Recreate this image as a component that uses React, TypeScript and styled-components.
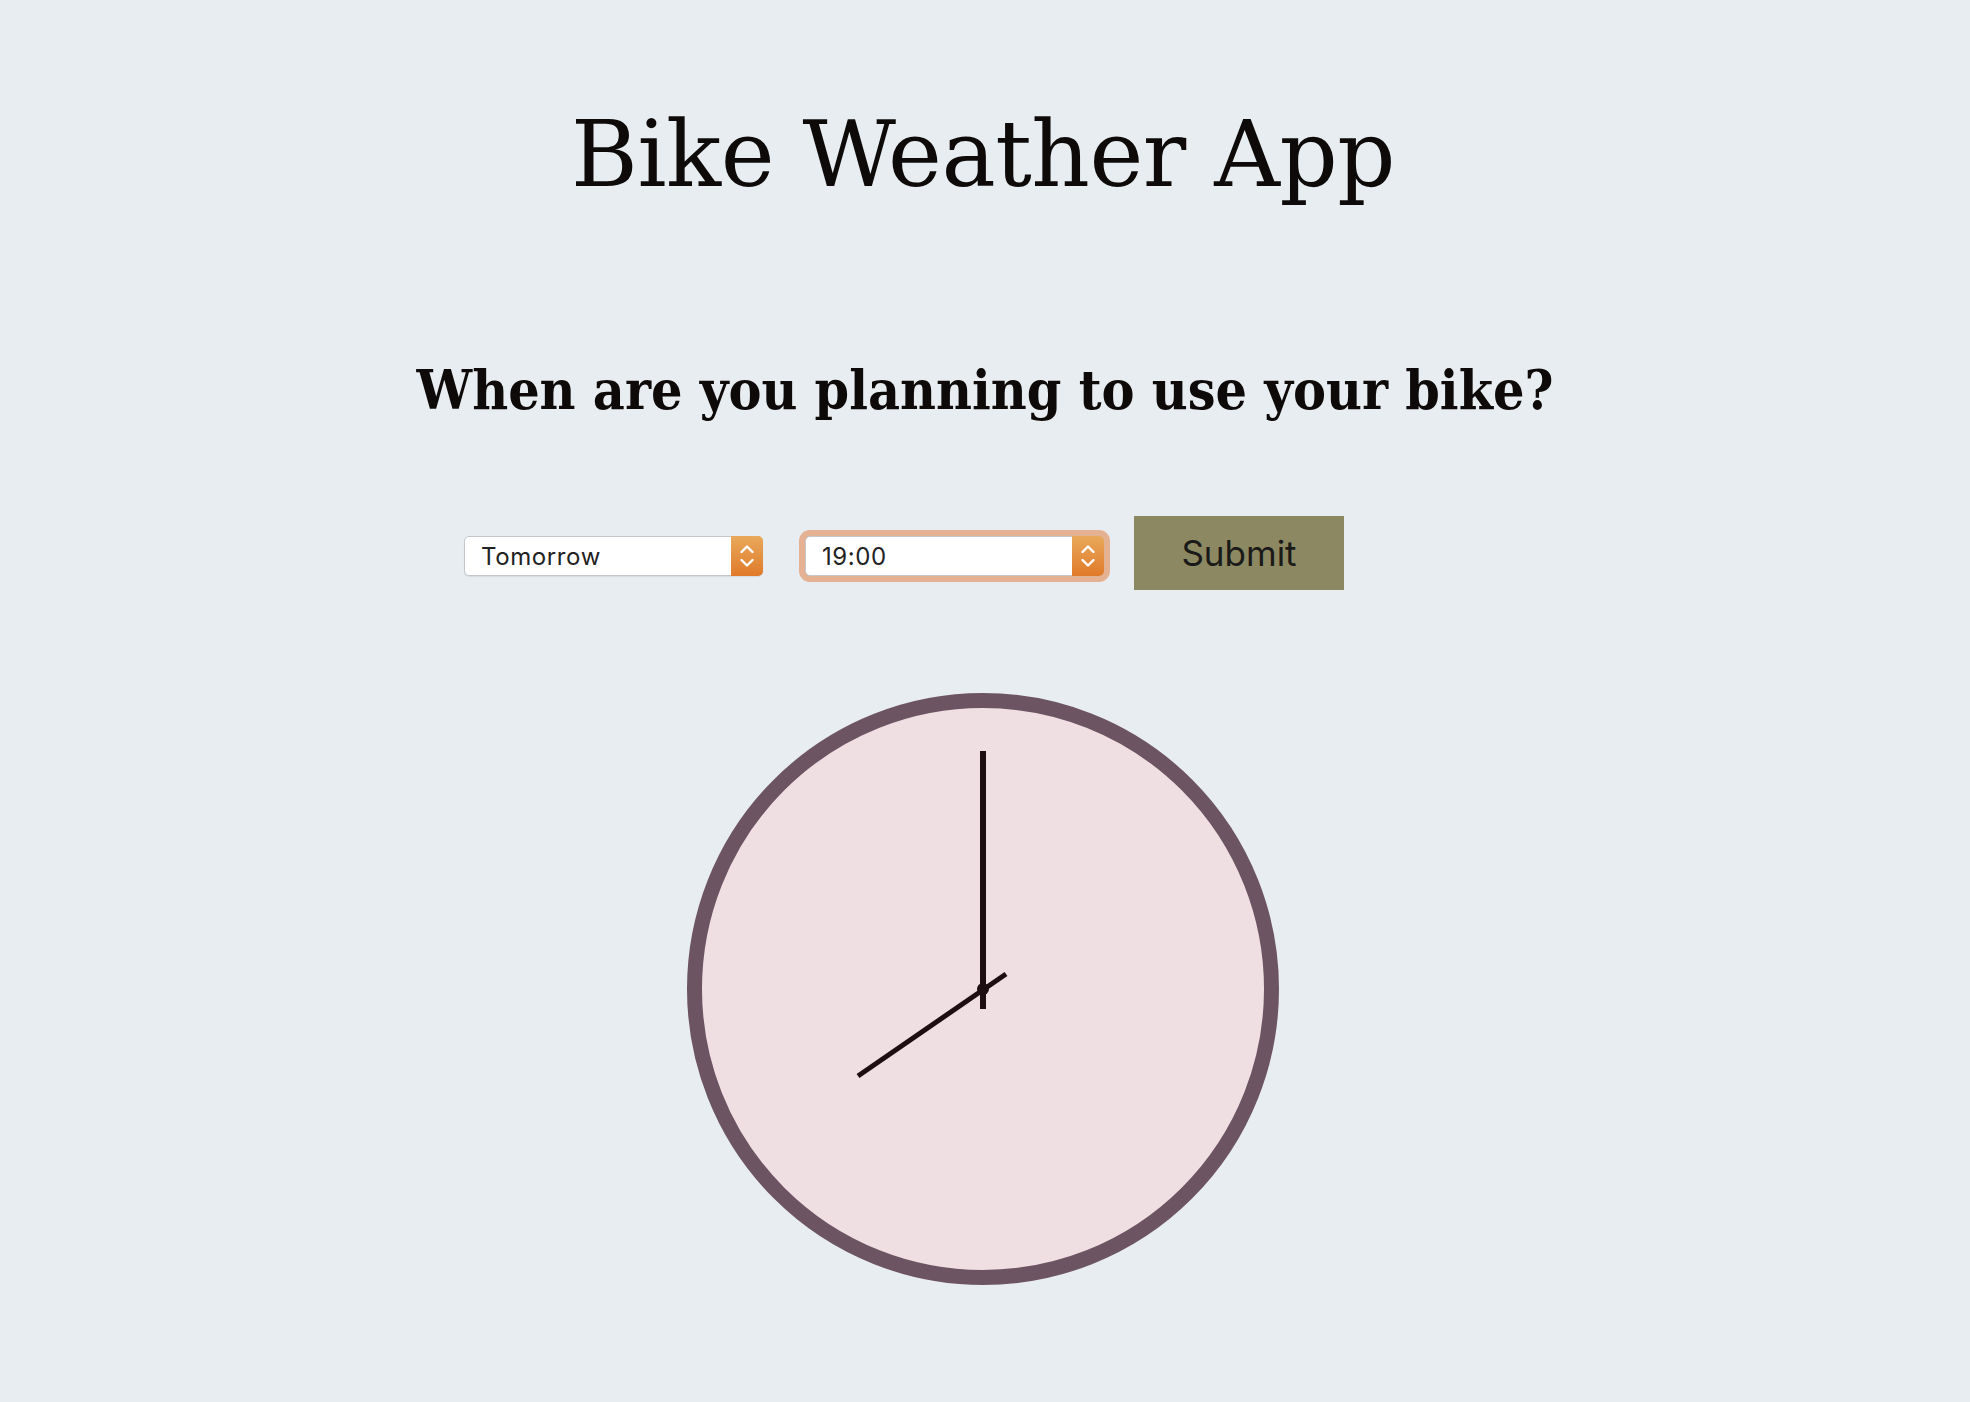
import React from "react";
import styled, { createGlobalStyle } from "styled-components";

const GlobalStyle = createGlobalStyle`
  html, body {
    margin: 0;
    padding: 0;
    background: #e8edf1;
  }
  body {
    font-family: "DejaVu Serif", serif;
    color: #0d0a09;
  }
`;

const Page = styled.main`
  min-height: 1402px;
  display: flex;
  flex-direction: column;
  align-items: center;
  padding-top: 100px;
  box-sizing: border-box;
`;

const Title = styled.h1`
  margin: 0 4px 0 0;
  font-family: "DejaVu Serif", serif;
  font-weight: 400;
  font-size: 91px;
  line-height: 110px;
  letter-spacing: -0.5px;
  color: #0d0a09;
`;

const Question = styled.h2`
  margin: 147px 0 0;
  font-family: "DejaVu Serif Condensed", "DejaVu Serif", serif;
  font-stretch: condensed;
  font-weight: 700;
  font-size: 55px;
  line-height: 66px;
  letter-spacing: 0px;
  color: #0d0a09;
`;

const Form = styled.form`
  display: flex;
  align-items: flex-start;
  justify-content: center;
  margin-top: 93px;
  padding-right: 162px;
`;

const Field = styled.label<{ $focused?: boolean }>`
  display: inline-flex;
  align-items: stretch;
  width: 299px;
  height: 40px;
  margin-top: 20px;
  box-sizing: border-box;
  border: 1px solid #c3c6ca;
  border-radius: 5px;
  background: #ffffff;
  margin-right: ${(p) => (p.$focused ? "30px" : "42px")};
  box-shadow: ${(p) =>
    p.$focused ? "0 0 0 6px #e5b193" : "0 1px 1px rgba(0,0,0,0.08)"};
`;

const NativeSelect = styled.select`
  appearance: none;
  -webkit-appearance: none;
  flex: 1;
  min-width: 0;
  border: none;
  background: transparent;
  outline: none;
  padding: 0 0 0 16px;
  font-family: Inter, "Liberation Sans", sans-serif;
  font-size: 24px;
  letter-spacing: 0.6px;
  color: #222222;
  cursor: pointer;
`;

const Stepper = styled.span`
  width: 32px;
  margin: -1px -1px -1px 0;
  border-radius: 0 5px 5px 0;
  background: linear-gradient(#e9a95b, #e07a2a);
  display: flex;
  align-items: center;
  justify-content: center;
`;

const SubmitButton = styled.button`
  width: 210px;
  height: 74px;
  border: none;
  border-radius: 0;
  background: #8c8862;
  font-family: Inter, "Liberation Sans", sans-serif;
  font-size: 35px;
  color: #1a1a18;
  cursor: pointer;
`;

const ClockWrap = styled.div`
  margin-top: 103px;
  margin-right: 4px;
  width: 592px;
  height: 592px;
`;

const Chevrons = () => (
  <svg width="16" height="28" viewBox="0 0 16 28" aria-hidden="true">
    <path
      d="M2.5 10 L8 4.5 L13.5 10 M2.5 18 L8 23.5 L13.5 18"
      fill="none"
      stroke="#ffffff"
      strokeWidth="2.4"
      strokeLinecap="round"
      strokeLinejoin="round"
    />
  </svg>
);

const Clock = () => (
  <svg width="592" height="592" viewBox="0 0 592 592">
    <circle cx="296" cy="296" r="288.5" fill="#efdfe2" stroke="#6c5462" strokeWidth="15" />
    <line x1="296" y1="58" x2="296" y2="316" stroke="#1d0e11" strokeWidth="6" />
    <line x1="319" y1="281" x2="171" y2="383" stroke="#1d0e11" strokeWidth="5" />
    <circle cx="296" cy="296" r="6" fill="#1d0e11" />
  </svg>
);

export default function App() {
  return (
    <>
      <GlobalStyle />
      <Page>
        <Title>Bike Weather App</Title>
        <Question>When are you planning to use your bike?</Question>
        <Form onSubmit={(e) => e.preventDefault()}>
          <Field>
            <NativeSelect defaultValue="tomorrow">
              <option value="today">Today</option>
              <option value="tomorrow">Tomorrow</option>
            </NativeSelect>
            <Stepper>
              <Chevrons />
            </Stepper>
          </Field>
          <Field $focused>
            <NativeSelect defaultValue="19:00">
              <option value="18:00">18:00</option>
              <option value="19:00">19:00</option>
              <option value="20:00">20:00</option>
            </NativeSelect>
            <Stepper>
              <Chevrons />
            </Stepper>
          </Field>
          <SubmitButton type="submit">Submit</SubmitButton>
        </Form>
        <ClockWrap>
          <Clock />
        </ClockWrap>
      </Page>
    </>
  );
}
